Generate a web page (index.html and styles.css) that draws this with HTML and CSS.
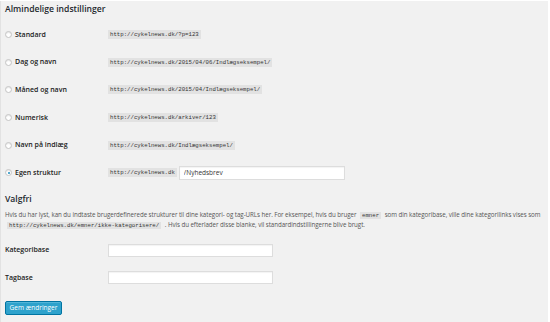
FILE: index.html
```html
<!DOCTYPE html>
<html lang="da">
<head>
<meta charset="UTF-8">
<title>Permalink-indstillinger</title>
<link rel="stylesheet" href="styles.css">
</head>
<body>
<div class="wrap">
  <h2>Almindelige indstillinger</h2>
  <form>
    <div class="row">
      <label class="choice"><input type="radio" name="struktur"> Standard</label>
      <div class="value"><code>http://cykelnews.dk/?p=123</code></div>
    </div>
    <div class="row">
      <label class="choice"><input type="radio" name="struktur"> Dag og navn</label>
      <div class="value"><code>http://cykelnews.dk/2015/04/06/Indlægseksempel/</code></div>
    </div>
    <div class="row">
      <label class="choice"><input type="radio" name="struktur"> Måned og navn</label>
      <div class="value"><code>http://cykelnews.dk/2015/04/Indlægseksempel/</code></div>
    </div>
    <div class="row">
      <label class="choice"><input type="radio" name="struktur"> Numerisk</label>
      <div class="value"><code>http://cykelnews.dk/arkiver/123</code></div>
    </div>
    <div class="row">
      <label class="choice"><input type="radio" name="struktur"> Navn på indlæg</label>
      <div class="value"><code>http://cykelnews.dk/Indlægseksempel/</code></div>
    </div>
    <div class="row">
      <label class="choice"><input type="radio" name="struktur" checked> Egen struktur</label>
      <div class="value"><code>http://cykelnews.dk</code><input type="text" class="text-field" value="/Nyhedsbrev"></div>
    </div>

    <h2 class="section">Valgfri</h2>
    <p class="intro">Hvis du har lyst, kan du indtaste brugerdefinerede strukturer til dine kategori- og tag-URLs her. For eksempel, hvis du bruger <code>emner</code> som din kategoribase, ville dine kategorilinks vises som <code>http://cykelnews.dk/emner/ikke-kategorisere/</code> . Hvis du efterlader disse blanke, vil standardindstillingerne blive brugt.</p>

    <div class="row">
      <label for="kategoribase">Kategoribase</label>
      <div class="value"><input type="text" id="kategoribase" class="base-field"></div>
    </div>
    <div class="row">
      <label for="tagbase">Tagbase</label>
      <div class="value"><input type="text" id="tagbase" class="base-field"></div>
    </div>

    <input type="submit" class="button" value="Gem ændringer">
  </form>
</div>
</body>
</html>
```

FILE: styles.css
```css
html, body {
  margin: 0;
  padding: 0;
  background-color: #ffffff;
}

.wrap {
  font-family: 'Open Sans', sans-serif;
  background-color: #f1f1f1;
  margin: 1px 2px 0 0;
  border-left: 1px solid #e2e2e2;
  height: 321px;
  padding-left: 4px;
  box-sizing: border-box;
  overflow: hidden;
  color: #222;
}

h2 {
  font-size: 8.6px;
  font-weight: 600;
  line-height: 10px;
  margin: 3px 0 0;
  color: #23282d;
}

form {
  margin-top: 7px;
}

.row {
  display: grid;
  grid-template-columns: 103px 1fr;
  align-items: center;
  height: 27.6px;
}

.row label {
  font-size: 7px;
  font-weight: 600;
  line-height: 10px;
  color: #222;
  display: flex;
  align-items: center;
}

.value {
  display: flex;
  align-items: center;
  gap: 2px;
  line-height: 9px;
}

.choice input[type='radio'] {
  -webkit-appearance: none;
  appearance: none;
  width: 7px;
  height: 7px;
  margin: 0 3px 0 0;
  border: 1px solid #c4c4c4;
  border-radius: 50%;
  background: #ffffff;
  box-shadow: inset 0 1px 1px rgba(0, 0, 0, 0.1);
  box-sizing: border-box;
  position: relative;
}

.choice input[type='radio']:checked::before {
  content: '';
  position: absolute;
  left: 1.5px;
  top: 1.5px;
  width: 2px;
  height: 2px;
  border-radius: 50%;
  background: #1e8cbe;
}

code {
  font-family: 'Liberation Mono', monospace;
  font-size: 5.7px;
  line-height: 9px;
  padding: 0 2px;
  background-color: rgba(0, 0, 0, 0.06);
  color: #333;
}

.value code {
  display: block;
}

.text-field, .base-field {
  font-family: 'Open Sans', sans-serif;
  font-size: 6.5px;
  height: 14px;
  padding: 0 4px;
  border: 1px solid #dddddd;
  background: #ffffff;
  box-shadow: inset 0 1px 1px rgba(0, 0, 0, 0.05);
  box-sizing: border-box;
  color: #333;
  margin: 0;
  outline: none;
}

.text-field {
  width: 166px;
}

.base-field {
  width: 165px;
  height: 13px;
}

h2.section {
  margin-top: 7px;
}

.intro {
  font-size: 6.2px;
  letter-spacing: -0.05px;
  line-height: 10px;
  color: #555;
  margin: 6px 0 7px;
  width: 542px;
}

.intro code {
  letter-spacing: 0;
  line-height: 8px;
  padding: 0 2px;
  margin: 0 2px;
}

.button {
  font-family: 'Open Sans', sans-serif;
  font-size: 6.5px;
  color: #ffffff;
  background-color: #2ea2cc;
  border: 1px solid #0074a2;
  border-radius: 2px;
  box-shadow: inset 0 1px 0 rgba(120, 200, 230, 0.5);
  height: 14px;
  width: 57px;
  padding: 0;
  margin-top: 9px;
  cursor: pointer;
}
```
